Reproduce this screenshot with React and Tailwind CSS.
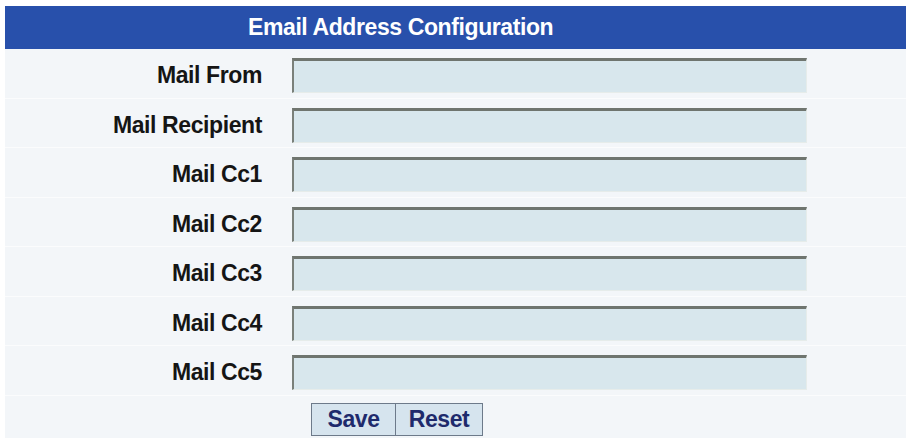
export default function App() {
  const rows = ["Mail From", "Mail Recipient", "Mail Cc1", "Mail Cc2", "Mail Cc3", "Mail Cc4", "Mail Cc5"];
  return (
    <div
      className="w-[906px] h-[443px] bg-white pt-[6px] pl-[5px] overflow-hidden"
      style={{ fontFamily: '"Liberation Sans", Arial, sans-serif' }}
    >
      <div className="h-[43px] bg-[#2850ab] flex items-center pl-[243px] text-white font-bold text-[23px] tracking-[-0.4px]">
        Email Address Configuration
      </div>
      <div className="bg-[#f3f6f9]">
        {rows.map((r) => (
          <div key={r} className="h-[49.5px] flex items-start pt-[9px] border-b border-[#fbfcfd]">
            <div className="w-[257px] h-[35px] flex items-center justify-end text-[23px] font-bold text-[#151515] tracking-[-0.4px]">
              {r}
            </div>
            <div className="ml-[30px] w-[515px] h-[35px] bg-[#d8e7ed] border-t-[3px] border-l-[2px] border-t-[#6f756f] border-l-[#7a807a] border-r border-b border-r-[#e6ecea] border-b-[#e6ecea]" />
          </div>
        ))}
        <div className="h-[42.5px] flex items-start pt-[7px] pl-[306px]">
          <button className="w-[85px] h-[33px] bg-[#d6e4ee] border border-[#6d7a8a] text-[#1e2a6c] font-bold text-[23px] tracking-[-0.4px] flex items-center justify-center">
            Save
          </button>
          <button className="w-[87px] h-[33px] bg-[#d6e4ee] border border-l-0 border-[#6d7a8a] text-[#1e2a6c] font-bold text-[23px] tracking-[-0.4px] flex items-center justify-center">
            Reset
          </button>
        </div>
      </div>
    </div>
  );
}
